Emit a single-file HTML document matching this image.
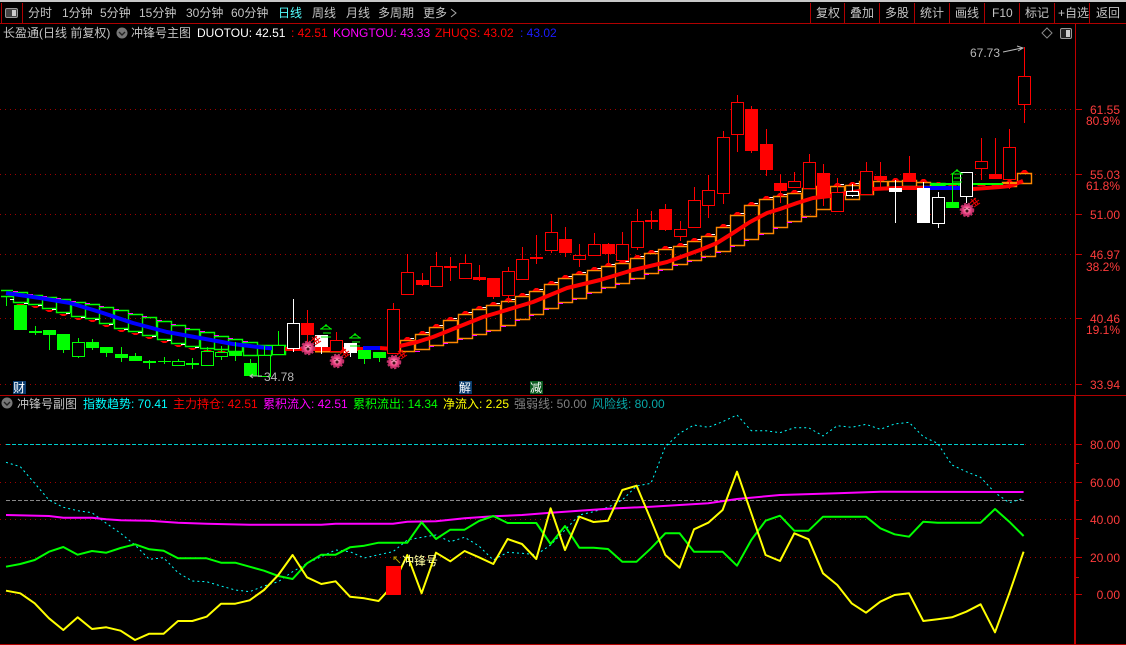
<!DOCTYPE html>
<html><head><meta charset="utf-8"><style>
html,body{margin:0;padding:0;background:#000;width:1126px;height:645px;overflow:hidden}
svg{position:absolute;left:0;top:0}
text{font-family:"Liberation Sans","WenQuanYi Zen Hei","Noto Sans CJK SC",sans-serif;font-size:12px;white-space:pre}
.t{fill:#c4c4c4}.a{fill:#ff3c3c;text-anchor:end}
</style></head><body>
<svg width="1126" height="645" viewBox="0 0 1126 645">
<rect width="1126" height="645" fill="#000"/>
<rect width="1126" height="2" fill="#c8c8c8"/>
<g shape-rendering="crispEdges">
<path d="M0 23.5H1126M0 395.5H1126M0 644.5H1126" stroke="#b00000" fill="none"/>
<path d="M1.5 3V23M22.5 3V23M810.500 3V23M844.5 3V23M879.5 3V23M914.5 3V23M949.5 3V23M984.5 3V23M1019.5 3V23M1054.5 3V23M1089.5 3V23" stroke="#b00000"/>
<path d="M1075.5 24V395" stroke="#c00000"/>
<path d="M1075 396V645" stroke="#c00000" stroke-width="2"/>
<path d="M1076 109.5h6M1076 174.5h6M1076 214.5h6M1076 254.5h6M1076 318.5h6M1076 384.5h6M1076 444.5h6M1076 482.5h6M1076 519.5h6M1076 557.5h6M1076 594.5h6M1076 463.5h3M1076 500.5h3M1076 538.5h3M1076 577.5h3" stroke="#c00000"/>
<path d="M0 109.5H1075M0 174.5H1075M0 214.5H1075M0 254.5H1075M0 318.5H1075M0 384.5H1075M0 444.5H1075M0 482.5H1075M0 519.5H1075M0 557.5H1075M0 594.5H1075" stroke="#a00000" stroke-dasharray="1 4" fill="none"/>
<path d="M6 444.5H1025" stroke="#00cccc" stroke-dasharray="4 2"/>
<path d="M6 500.5H1025" stroke="#888" stroke-dasharray="4 2"/>
</g>
<!-- icons top -->
<rect x="5.5" y="8.5" width="12" height="9" rx="1.5" fill="#444" stroke="#999"/><rect x="12" y="10" width="4" height="6" fill="#ccc"/>
<rect x="1060.5" y="28.5" width="11" height="10" rx="1.5" fill="#222" stroke="#999"/><rect x="1066" y="30" width="4" height="7" fill="#ccc"/>
<path d="M1047 28l5 5-5 5-5-5z" fill="none" stroke="#888"/>
<circle cx="122" cy="33" r="5.5" fill="#777"/><path d="M119 32l3 3 3-3" stroke="#222" stroke-width="1.4" fill="none"/>
<circle cx="7" cy="403" r="5.5" fill="#777"/><path d="M4 402l3 3 3-3" stroke="#222" stroke-width="1.4" fill="none"/>
<!-- tabs -->
<text class="t" x="28" y="17">分时</text><text class="t" x="62" y="17">1分钟</text><text class="t" x="100" y="17">5分钟</text><text class="t" x="139" y="17">15分钟</text><text class="t" x="186" y="17">30分钟</text><text class="t" x="231" y="17">60分钟</text><text x="278" y="17" fill="#5ff">日线</text><text class="t" x="312" y="17">周线</text><text class="t" x="346" y="17">月线</text><text class="t" x="378" y="17">多周期</text><text class="t" x="423" y="17">更多</text>
<path d="M451 9l5 4-5 4" fill="none" stroke="#aaa"/>
<text class="t" x="816" y="17">复权</text><text class="t" x="850" y="17">叠加</text><text class="t" x="885" y="17">多股</text><text class="t" x="920" y="17">统计</text><text class="t" x="955" y="17">画线</text><text class="t" x="992" y="17">F10</text><text class="t" x="1025" y="17">标记</text><text class="t" x="1058" y="17">+自选</text><text class="t" x="1096" y="17">返回</text>
<!-- title -->
<text class="t" x="3" y="37">长盈通(日线 前复权)</text><text class="t" x="131" y="37">冲锋号主图</text>
<text x="197" y="37" fill="#fff">DUOTOU: 42.51</text><text x="291" y="37" fill="#f00">: 42.51</text><text x="333" y="37" fill="#f0f">KONGTOU: 43.33</text><text x="435" y="37" fill="#f00">ZHUQS: 43.02</text><text x="520" y="37" fill="#1c1cff">: 43.02</text>
<!-- axis labels -->
<text class="a" x="1120" y="114">61.55</text><text class="a" x="1120" y="125">80.9%</text><text class="a" x="1120" y="179">55.03</text><text class="a" x="1120" y="190">61.8%</text><text class="a" x="1120" y="219">51.00</text><text class="a" x="1120" y="259">46.97</text><text class="a" x="1120" y="271">38.2%</text><text class="a" x="1120" y="323">40.46</text><text class="a" x="1120" y="334">19.1%</text><text class="a" x="1120" y="389">33.94</text>
<text class="a" x="1120" y="449">80.00</text><text class="a" x="1120" y="487">60.00</text><text class="a" x="1120" y="524">40.00</text><text class="a" x="1120" y="562">20.00</text><text class="a" x="1120" y="599">0.00</text>
<!-- boxes -->
<g fill="none">
<path stroke="#0f0" stroke-width="1.4" d="M1 290.5H13M1 296.5H13M13.5 292.5h14v10h-14zM28.5 295.5h14v9h-14zM42.5 297.5h14v11h-14zM56.5 299.5h14v13h-14zM71.5 302.5h14v14h-14zM85.5 304.5h14v14h-14zM99.5 307.5h14v16h-14zM114.5 310.5h14v18h-14zM128.5 314.5h14v17h-14zM142.5 317.5h14v18h-14zM157.5 321.5h14v18h-14zM171.5 325.5h14v18h-14zM185.5 329.5h14v17h-14zM200.5 332.5h14v16h-14zM214.5 336.5h14v13h-14zM228.5 339.5h14v12h-14zM243.5 342.5h14v13h-14zM257.5 345.5h14v10h-14zM271.5 345.5h14v9h-14zM931 183.5h14v2h-14zM945 184.5h14v4h-14z"/>
<path stroke="#f80" stroke-width="1.4" d="M400.5 340.5h14v11h-14zM415.5 334.5h14v15h-14zM429.5 327.5h14v18h-14zM443.5 320.5h14v22h-14zM458.5 314.5h14v24h-14zM472.5 309.5h14v25h-14zM486.5 305.5h14v25h-14zM501.5 301.5h14v24h-14zM515.5 296.5h14v23h-14zM529.5 291.5h14v23h-14zM544.5 284.5h14v24h-14zM558.5 278.5h14v24h-14zM572.5 274.5h14v24h-14zM587.5 270.5h14v22h-14zM601.5 266.5h14v21h-14zM615.5 263.5h14v20h-14zM630.5 258.5h14v20h-14zM644.5 253.5h14v20h-14zM658.5 249.5h14v20h-14zM673.5 246.5h14v18h-14zM687.5 241.5h14v19h-14zM701.5 236.5h14v20h-14zM716.5 227.5h14v24h-14zM730.5 215.5h14v30h-14zM744.5 205.5h14v34h-14zM759.5 199.5h14v34h-14zM773.5 196.5h14v31h-14zM787.5 193.5h14v28h-14zM802.5 188.5h14v28h-14zM816.5 186.5h14v23h-14zM830.5 186.5h14v8h-14zM845.5 185.5h14v14h-14zM859.5 181.5h14v13h-14zM873.5 181.5h14v8h-14zM888.5 181.5h14v7h-14zM902.5 180.5h14v6h-14zM916.5 182.5h14v4h-14zM1002.5 182.5h14v4h-14zM1017.5 173.5h14v10h-14z"/>
<g shape-rendering="crispEdges">
<path stroke="#f0f" d="M13 291.5h5M28 294.5h5M42 296.5h5M56 298.5h5M71 301.5h5M85 303.5h5M99 306.5h5M114 309.5h5M128 313.5h5M142 316.5h5M157 320.5h5M171 324.5h5M185 328.5h5M200 331.5h5M214 335.5h5M228 338.5h5M243 341.5h5M415 351.5h5M429 346.5h5M443 343.5h5M458 339.5h5M472 335.5h5M486 331.5h5M501 326.5h5M515 320.5h5M529 315.5h5M544 309.5h5M558 303.5h5M572 299.5h5M587 293.5h5M601 288.5h5M615 284.5h5M630 279.5h5M644 274.5h5M658 270.5h5M673 265.5h5M687 261.5h5M701 257.5h5M716 252.5h5M730 246.5h5M744 240.5h5M759 234.5h5M773 228.5h5M787 222.5h5M802 217.5h5"/>
<path stroke="#fff" d="M10 299.5h4M24 303.5h4M38 305.5h4M52 309.5h4M66 313.5h4M81 317.5h4M95 319.5h4M109 324.5h4M124 329.5h4M138 332.5h4M152 336.5h4M167 340.5h4M181 344.5h4M195 347.5h4M410 338.5h4M425 332.5h4M439 325.5h4M453 318.5h4M468 312.5h4M482 307.5h4M496 303.5h4M511 299.5h4M525 294.5h4M539 289.5h4M554 282.5h4M568 276.5h4M582 272.5h4M597 268.5h4M611 264.5h4M625 261.5h4M640 256.5h4M654 251.5h4M668 247.5h4M683 244.5h4M697 239.5h4M711 234.5h4M726 225.5h4M740 213.5h4M754 203.5h4M769 197.5h4M783 194.5h4M797 191.5h4M812 186.5h4M826 184.5h4M840 184.5h4M855 183.5h4M869 179.5h4"/>
</g>
</g>
<path fill="#f00" d="M16 304h9l-3 2h-3zM31 306h9l-3 2h-3zM45 310h9l-3 2h-3zM59 314h9l-3 2h-3zM74 318h9l-3 2h-3zM88 320h9l-3 2h-3zM102 325h9l-3 2h-3zM117 330h9l-3 2h-3zM131 333h9l-3 2h-3zM145 337h9l-3 2h-3zM160 341h9l-3 2h-3zM174 345h9l-3 2h-3zM188 348h9l-3 2h-3zM203 350h9l-3 2h-3zM217 351h9l-3 2h-3zM231 353h9l-3 2h-3z
M403 340h9l-3-3h-3zM418 334h9l-3-3h-3zM432 327h9l-3-3h-3zM446 320h9l-3-3h-3zM461 314h9l-3-3h-3zM475 309h9l-3-3h-3zM489 305h9l-3-3h-3zM504 301h9l-3-3h-3zM518 296h9l-3-3h-3zM532 291h9l-3-3h-3zM547 284h9l-3-3h-3zM561 278h9l-3-3h-3zM575 274h9l-3-3h-3zM590 270h9l-3-3h-3zM604 266h9l-3-3h-3zM618 263h9l-3-3h-3zM633 258h9l-3-3h-3zM647 253h9l-3-3h-3zM661 249h9l-3-3h-3zM676 246h9l-3-3h-3zM690 241h9l-3-3h-3zM704 236h9l-3-3h-3zM719 227h9l-3-3h-3zM733 215h9l-3-3h-3zM747 205h9l-3-3h-3zM762 199h9l-3-3h-3zM776 196h9l-3-3h-3zM790 193h9l-3-3h-3zM805 188h9l-3-3h-3zM819 186h9l-3-3h-3zM833 186h9l-3-3h-3zM848 185h9l-3-3h-3zM862 181h9l-3-3h-3zM876 181h9l-3-3h-3zM891 181h9l-3-3h-3zM905 180h9l-3-3h-3zM919 182h9l-3-3h-3zM934 185h9l-3-3h-3zM948 186h9l-3-3h-3zM977 186h9l-3-3h-3zM991 186h9l-3-3h-3zM1005 183h9l-3-3h-3zM1020 173h9l-3-3h-3z"/>
<!-- MA lines -->
<g fill="none" stroke-linejoin="round">
<path stroke="#00f" stroke-width="4" d="M6 293L40 298L70 303L100 312L133 323L167 332L200 338L233 344L267 348L285 349"/>
<path stroke="#f80" stroke-width="3" d="M315 351H345"/>
<path stroke="#f00" stroke-width="4" d="M285 349H363M380 348L393 349L400 346L417 342L433 337L458 327L483 317L500 312L533 302L567 288L600 280L633 270L667 262L700 250L717 243L733 233L750 222L767 213L780 209L797 203L813 198L830 196L847 193L873 189L897 188L923 188"/>
<path stroke="#00f" stroke-width="4" d="M363 348H380M923 188H966"/>
<path stroke="#0f0" stroke-width="2" d="M930 184H966"/>
<path stroke="#f00" stroke-width="4" d="M973 189L1000 187L1010 186L1023 181"/>
<path stroke="#0f0" stroke-width="2" d="M973 184H1003"/>
<path stroke="#f80" stroke-width="2" d="M1003 183H1017"/>
</g>
<!-- candles -->
<g shape-rendering="crispEdges">
<path stroke="#0f0" fill="none" d="M6.5 296V306M35.5 326V335M49.5 335V350M63.5 350V353M78.5 338V342M78.5 356V358M92.5 339V350M106.5 353V357M121.5 347V362M135.5 353V356M149.5 360V369M164.5 357V364M178.5 359V366M192.5 358V369M207.5 347V366M221.5 346V360M235.5 342V361M250.5 359V363M264.5 346V355M278.5 331V345M364.5 359V364M379.5 358V362M952.5 174V202"/>
<path fill="#0f0" d="M14 305h13v25h-13zM29 331h13v2h-13zM43 330h13v5h-13zM57 334h13v16h-13zM86 342h13v6h-13zM100 347h13v6h-13zM115 354h13v4h-13zM129 356h13v5h-13zM143 361h13v2h-13zM158 361h13v1h-13zM186 363h13v2h-13zM229 351h13v5h-13zM244 363h13v13h-13zM358 350h13v9h-13zM373 352h13v6h-13zM946 202h13v6h-13z"/>
<path stroke="#0f0" fill="#000" d="M72.500 342.500h12v14h-12zM172.500 361.500h12v4h-12zM201.500 351.500h12v14h-12zM215.500 352.500h12v4h-12zM258.500 355.500h12v21h-12zM272.500 345.500h12v9h-12z"/>
<path stroke="#f00" fill="none" d="M307.500 310V323M307.500 335V345M336.500 332V340M393.500 303V309M407.500 254V272M422.500 273V286M436.500 252V266M450.500 257V281M465.500 254V263M479.500 265V281M493.500 297V299M508.500 267V303M522.500 247V259M536.500 235V264M551.500 214V253M565.500 227V257M579.500 244V267M594.500 233V256M608.500 243V263M622.500 232V244M637.500 209V250M651.500 211V229M665.500 204V231M680.500 221V241M694.500 187V228M708.500 175V218M723.500 131V204M737.500 95V152M751.500 106V153M766.500 129V176M780.500 174V203M794.500 172V181M809.500 154V162M823.500 164V206M837.500 178V192M866.500 162V171M880.500 162V190M909.500 156V173M981.500 138V180M995.500 138V174M1009.500 129V189M1024.500 47V123"/>
<path stroke="#f00" fill="#000" d="M330.500 340.500h12v11h-12zM387.500 309.500h12v44h-12zM401.500 272.500h12v22h-12zM430.500 266.500h12v20h-12zM459.500 263.500h12v15h-12zM502.500 271.500h12v24h-12zM516.500 259.500h12v20h-12zM545.500 232.500h12v18h-12zM573.500 255.500h12v4h-12zM588.500 244.500h12v11h-12zM616.500 244.500h12v16h-12zM631.500 221.500h12v26h-12zM674.500 229.500h12v7h-12zM688.500 200.500h12v27h-12zM702.500 190.500h12v15h-12zM717.500 137.500h12v56h-12zM731.500 102.500h12v32h-12zM788.500 181.500h12v6h-12zM803.500 162.500h12v26h-12zM831.500 192.500h12v19h-12zM860.500 171.500h12v23h-12zM975.500 161.500h12v7h-12zM1003.500 147.500h12v32h-12zM1018.500 76.500h12v28h-12z"/>
<path fill="#f00" d="M301 323h13v12h-13zM416 280h13v5h-13zM444 266h13v2h-13zM473 277h13v3h-13zM487 278h13v19h-13zM530 257h13v2h-13zM559 239h13v14h-13zM602 244h13v10h-13zM645 220h13v2h-13zM659 209h13v21h-13zM745 109h13v42h-13zM760 144h13v26h-13zM774 183h13v8h-13zM817 173h13v25h-13zM874 176h13v4h-13zM903 173h13v9h-13zM989 174h13v5h-13z"/>
<path stroke="#fff" fill="none" d="M293.500 299V323M293.500 348V352M321.500 347V354M350.500 353V357M852.500 184V197M895.500 180V223M923.500 182V188M938.500 192V197M938.500 223V228M966.500 196V203"/>
<path stroke="#fff" fill="#000" d="M287.500 323.500h12v25h-12zM846.500 191.500h12v4h-12zM932.500 197.500h12v26h-12zM960.500 172.500h12v24h-12z"/>
<path fill="#fff" d="M315 335h13v12h-13zM344 343h13v10h-13zM889 188h13v4h-13zM917 188h13v35h-13z"/>
</g>
<!-- gears + marks -->
<defs>
<radialGradient id="g"><stop offset="0" stop-color="#ffc8d8"/><stop offset=".6" stop-color="#f04888"/><stop offset="1" stop-color="#c03068"/></radialGradient>
<g id="gear"><circle r="6" fill="url(#g)" stroke="#c03068" stroke-width="2.5" stroke-dasharray="2.200 1.400"/><circle r="1.5" cy="1" fill="#401018"/><path d="M-2.500-1.500h1M1.500-1.500h1" stroke="#401018"/><path d="M3-7l6-5M5-5l7-5M7-3l6-4M4-11l5 6M7-12l4 6" stroke="#f00000" fill="none"/></g>
<g id="sell" fill="none" stroke="#0f0"><path d="M-5-1l5-4 5 4M-6-1h12M0-3v-3M-3 3h8M-5 7h10"/></g>
</defs>
<use href="#gear" x="308" y="348"/><use href="#gear" x="337" y="361"/><use href="#gear" x="394" y="362"/><use href="#gear" x="967" y="210"/>
<use href="#sell" x="326" y="330"/><use href="#sell" x="355" y="339"/><use href="#sell" x="957" y="175"/>
<!-- price notes -->
<text x="970" y="57" fill="#b8b8b8">67.73</text><path d="M1003 52L1022 48M1017 46l6 2-5 3" fill="none" stroke="#b8b8b8"/>
<text x="264" y="381" fill="#b8b8b8">34.78</text><path d="M250 376H262M253 374l-3 2 3 2" fill="none" stroke="#b8b8b8"/>
<rect x="13" y="381" width="13" height="13" fill="#0a3c6e"/><text x="13" y="392" fill="#fff">财</text>
<rect x="459" y="381" width="13" height="13" fill="#0a3c6e"/><text x="459" y="392" fill="#fff">解</text>
<rect x="530" y="381" width="13" height="13" fill="#0a5a1e"/><text x="530" y="392" fill="#fff">减</text>
<!-- sub title -->
<text class="t" x="17" y="408">冲锋号副图</text>
<text x="83" y="408" fill="#0ff">指数趋势: 70.41</text><text x="173" y="408" fill="#f00">主力持仓: 42.51</text><text x="263" y="408" fill="#f0f">累积流入: 42.51</text><text x="353" y="408" fill="#0f0">累积流出: 14.34</text><text x="443" y="408" fill="#ff0">净流入: 2.25</text><text x="514" y="408" fill="#808080">强弱线: 50.00</text><text x="592" y="408" fill="#08a8a8">风险线: 80.00</text>
<!-- sub lines -->
<g fill="none" stroke-linejoin="round">
<polyline stroke="#0ff" stroke-dasharray="2 3" points="6,462.3 20.3,466.7 34.7,483.3 49,500 63.3,507.3 77.7,510.7 92,512.7 106.3,523.3 120.6,533.3 135,545 149.3,559.3 163.6,557.7 178,572.7 192.3,581 206.6,581.7 221,586 235.3,590 249.6,591.7 264,586 278.3,581.7 292.6,571.7 307,563.3 321.3,556.7 335.6,550 350,551.7 364.3,558 378.6,554.7 393,551.7 407.3,540 421.6,537.3 436,535 450.3,541.7 464.6,537.3 479,546 493.3,560 507.6,552.3 522,553.3 536.3,554.7 550.6,545 565,530 579.3,515 593.6,511.7 608,507.3 622.3,500 636.6,486 651,483.3 665.3,446.700 679.6,433.3 694,425 708.3,427.3 722.6,421.7 737,415 751.3,430.7 765.6,430.7 780,432.7 794.3,427.7 808.6,427.7 823,436 837.3,425.7 851.6,427.3 866,424.3 880.3,429.3 894.6,424 909,422.3 923.3,436.7 937.6,443.3 952,465 966.3,471.7 980.6,477.3 995,492.7 1009.3,502.7 1023.6,498.3"/>
<polyline stroke="#f0f" stroke-width="2" points="6,515 49,516 63.3,517.7 92,517.7 106.3,519.3 120.6,520.3 149.3,520.7 178,522.7 206.6,523.7 249.6,524.7 321.3,524.7 335.6,523.7 393,523.7 407.3,521.7 436,521.3 464.6,518.3 493.3,516.3 522,515 550.6,512.7 565,511.7 608,508.7 651,506.7 708.3,503.3 737,499 780,495 837.3,493.3 880.3,491.7 1023.6,492"/>
<polyline stroke="#0f0" stroke-width="2" points="6,566.7 20.3,564 34.7,560 49,551.7 63.3,547 77.7,554.7 92,551 106.3,552.7 120.6,548 135,544.3 149.3,549.3 163.6,550.7 178,558.3 192.3,558.3 206.6,558.3 221,562.7 235.3,562.7 249.6,566.7 264,570.7 278.3,576 292.6,579 307,563.3 321.3,554.7 335.6,554.7 350,547.3 364.3,545.7 378.6,542.7 393,542.7 407.3,542.7 421.6,522.3 436,539 450.3,529.7 464.6,529.7 479,521 493.3,516 507.6,523 522,523 536.3,523 550.6,544 565,526 579.3,547.7 593.6,547.7 608,549 622.3,561.7 636.6,561.7 651,548.3 665.3,533.3 679.6,533.3 694,551.7 708.3,551.7 722.6,551.7 737,565.7 751.3,540 765.6,520.7 780,515.7 794.3,530.7 808.6,530.7 823,516.7 837.3,516.7 851.6,516.7 866,516.7 880.3,528.3 894.6,534.3 909,536.7 923.3,521.7 937.6,522.7 952,522.7 966.3,522.7 980.6,522.7 995,509 1009.3,521.7 1023.6,536"/>
<polyline stroke="#ff0" stroke-width="2" points="6,590.7 20.3,593.3 34.7,603.3 49,618.3 63.3,630 77.7,617.3 92,629 106.3,627.3 120.6,630.7 135,640 149.3,633.7 163.6,633.7 178,621 192.3,621 206.6,616.7 221,603.7 235.3,603.7 249.6,600.3 264,590 278.3,575 292.6,555 307,577.3 321.3,584 335.6,581.3 350,596.7 364.3,598.3 378.6,601 393,585 407.3,555 421.6,593.3 436,552.7 450.3,561.3 464.6,551 479,557.3 493.3,564 507.6,539 522,544 536.3,559 550.6,508.3 565,550 579.3,516.7 593.6,522 608,520.7 622.3,490 636.6,485.7 651,520 665.3,555 679.6,567.7 694,529.3 708.3,522.7 722.6,510 737,471.7 751.3,513.3 765.6,555 780,561 794.3,533.3 808.6,539.3 823,573.3 837.3,585 851.6,603.3 866,612.7 880.3,601.7 894.6,595 909,593.3 923.3,621 937.6,619.3 952,617.3 966.3,611.7 980.6,604.3 995,632.3 1009.3,593.3 1023.6,551.7"/>
</g>
<rect x="386" y="566" width="15" height="29" fill="#f00"/>
<text x="402" y="565" fill="#ffffa0">冲锋号</text>
<path d="M400 563L394 557M394 560V557H397" stroke="#b0a000" fill="none"/>
</svg>
</body></html>
